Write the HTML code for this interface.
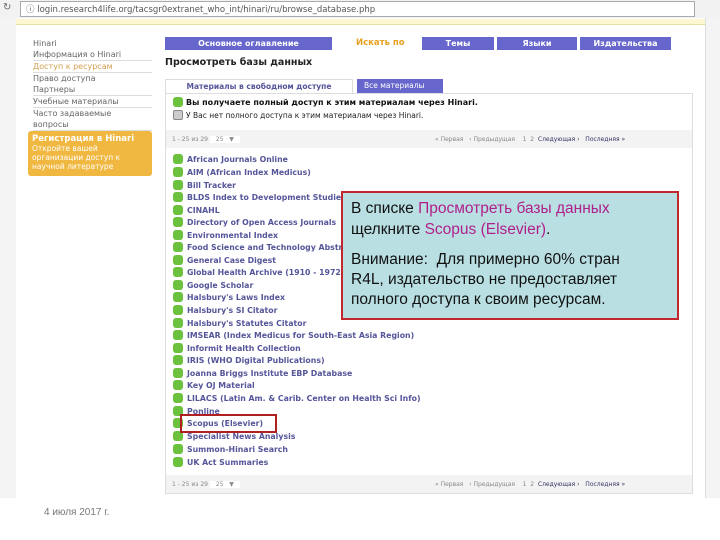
<!DOCTYPE html>
<html><head><meta charset="utf-8"><style>
*{margin:0;padding:0;box-sizing:border-box}
body{width:720px;height:540px;background:#fff;position:relative;overflow:hidden;font-family:"DejaVu Sans","Liberation Sans",sans-serif}
.a{position:absolute;white-space:nowrap}
.menu{font-size:8px;color:#666;line-height:11px}
.menu div{border-bottom:1px solid #ddd;}
.tab{position:absolute;top:37px;height:13px;background:#6666cc;color:#fff;font-size:8px;font-weight:bold;text-align:center;line-height:13px}
.item{position:absolute;left:173px;font-size:7.8px;font-weight:bold;color:#55559a;height:12px;line-height:11px}
.item:before{content:"";display:inline-block;width:10px;height:10px;background:#6cc13e;border-radius:3px;vertical-align:-2px;margin-right:4px}
.pg{font-size:6px;color:#888}
</style></head><body>
<div class="a" style="left:0;top:0;width:720px;height:18px;background:#f2f2f2"></div>
<div class="a" style="left:3px;top:2px;font-size:10px;color:#666">&#8635;</div>
<div class="a" style="left:20px;top:1px;width:675px;height:16px;background:#fff;border:1px solid #aaa"></div>
<div class="a" style="left:26px;top:3px;font-size:8.5px;color:#555">ⓘ login.research4life.org/tacsgr0extranet_who_int/hinari/ru/browse_database.php</div>
<div class="a" style="left:0;top:18px;width:16px;height:480px;background:#f4f4f4"></div>
<div class="a" style="left:705px;top:18px;width:15px;height:480px;background:#f4f4f4;border-left:1px solid #ddd"></div>
<div class="a" style="left:16px;top:19px;width:689px;height:6px;background:#fbf8d2;border-bottom:1px solid #e8e0a0"></div>

<div class="a menu" style="left:33px;top:38px;width:119px">
<div style="border:0">Hinari</div>
<div>Информация о Hinari</div>
<div style="color:#d4a050">Доступ к ресурсам</div>
<div style="border:0">Право доступа</div>
<div>Партнеры</div>
<div>Учебные материалы</div>
<div>Часто задаваемые<br>вопросы</div>
</div>
<div class="a" style="left:28px;top:131px;width:124px;height:45px;background:#f0b840;border-radius:3px;color:#fff;font-size:7.5px;padding:3px 4px;line-height:9px;white-space:normal">
<b style="font-size:8.5px">Регистрация в Hinari</b><br>Откройте вашей организации доступ к научной литературе</div>

<div class="tab" style="left:165px;width:167px">Основное оглавление</div>
<div class="a" style="left:356px;top:38px;font-size:8.5px;font-weight:bold;color:#e8a020">Искать по</div>
<div class="tab" style="left:422px;width:72px">Темы</div>
<div class="tab" style="left:497px;width:80px">Языки</div>
<div class="tab" style="left:580px;width:91px">Издательства</div>
<div class="a" style="left:165px;top:57px;font-size:9.5px;font-weight:bold;color:#222">Просмотреть базы данных</div>

<div class="a" style="left:165px;top:79px;width:188px;height:15px;border:1px solid #ddd;border-bottom:0;background:#fff;font-size:7.5px;color:#55559a;text-align:center;line-height:14px;font-weight:bold">Материалы в свободном доступе</div>
<div class="a" style="left:357px;top:79px;width:86px;height:14px;background:#6666cc;color:#fff;font-size:7.5px;line-height:14px;padding-left:7px">Все материалы</div>
<div class="a" style="left:165px;top:93px;width:528px;height:401px;border:1px solid #ddd"></div>
<div class="a" style="left:173px;top:97px;font-size:8px;font-weight:bold;color:#111"><span style="display:inline-block;width:10px;height:10px;background:#6cc13e;border-radius:3px;vertical-align:-2px;margin-right:3px"></span>Вы получаете полный доступ к этим материалам через Hinari.</div>
<div class="a" style="left:173px;top:110px;font-size:7.5px;color:#222"><span style="display:inline-block;width:10px;height:10px;background:#ccc;border:1px solid #888;border-radius:2px;vertical-align:-2px;margin-right:3px"></span>У Вас нет полного доступа к этим материалам через Hinari.</div>
<div class="a" style="left:166px;top:130px;width:526px;height:18px;background:#f3f3f3"></div>
<div class="a pg" style="left:172px;top:136px">1 - 25 из 29 <span style="background:#fff;padding:0 6px">25 &nbsp; ▼</span></div>
<div class="a pg" style="left:435px;top:136px">« Первая &nbsp; ‹ Предыдущая &nbsp;&nbsp; 1 &nbsp;2 &nbsp;<span style="color:#336">Следующая › &nbsp; Последняя »</span></div>

<div class="item" style="top:154px">African Journals Online</div>
<div class="item" style="top:167px">AIM (African Index Medicus)</div>
<div class="item" style="top:180px">Bill Tracker</div>
<div class="item" style="top:192px">BLDS Index to Development Studies</div>
<div class="item" style="top:205px">CINAHL</div>
<div class="item" style="top:217px">Directory of Open Access Journals</div>
<div class="item" style="top:230px">Environmental Index</div>
<div class="item" style="top:242px">Food Science and Technology Abstracts</div>
<div class="item" style="top:255px">General Case Digest</div>
<div class="item" style="top:267px">Global Health Archive (1910 - 1972)</div>
<div class="item" style="top:280px">Google Scholar</div>
<div class="item" style="top:292px">Halsbury's Laws Index</div>
<div class="item" style="top:305px">Halsbury's SI Citator</div>
<div class="item" style="top:318px">Halsbury's Statutes Citator</div>
<div class="item" style="top:330px">IMSEAR (Index Medicus for South-East Asia Region)</div>
<div class="item" style="top:343px">Informit Health Collection</div>
<div class="item" style="top:355px">IRIS (WHO Digital Publications)</div>
<div class="item" style="top:368px">Joanna Briggs Institute EBP Database</div>
<div class="item" style="top:380px">Key OJ Material</div>
<div class="item" style="top:393px">LILACS (Latin Am. &amp; Carib. Center on Health Sci Info)</div>
<div class="item" style="top:406px">Ponline</div>
<div class="item" style="top:418px">Scopus (Elsevier)</div>
<div class="item" style="top:431px">Specialist News Analysis</div>
<div class="item" style="top:444px">Summon-Hinari Search</div>
<div class="item" style="top:457px">UK Act Summaries</div>
<div class="a" style="left:180px;top:414px;width:97px;height:19px;border:2px solid #b02020"></div>

<div class="a" style="left:166px;top:475px;width:526px;height:18px;background:#f3f3f3"></div>
<div class="a pg" style="left:172px;top:481px">1 - 25 из 29 <span style="background:#fff;padding:0 6px">25 &nbsp; ▼</span></div>
<div class="a pg" style="left:435px;top:481px">« Первая &nbsp; ‹ Предыдущая &nbsp;&nbsp; 1 &nbsp;2 &nbsp;<span style="color:#336">Следующая › &nbsp; Последняя »</span></div>

<div class="a" style="left:341px;top:191px;width:338px;height:129px;background:#b9dfe3;border:2px solid #c0282e;padding:5px 0 0 8px;font-family:'Liberation Sans',sans-serif;font-size:15.5px;line-height:21px;color:#111;white-space:normal">
В списке <span style="color:#b0208a">Просмотреть базы данных</span><br>щелкните <span style="color:#b0208a">Scopus (Elsevier)</span>.
<div style="margin-top:10px;line-height:20px">Внимание:&nbsp; Для примерно 60% стран<br>R4L, издательство не предоставляет<br>полного доступа к своим ресурсам.</div></div>

<div class="a" style="left:44px;top:507px;font-family:'Liberation Sans',sans-serif;font-size:10px;color:#777">4 июля 2017 г.</div>
</body></html>
